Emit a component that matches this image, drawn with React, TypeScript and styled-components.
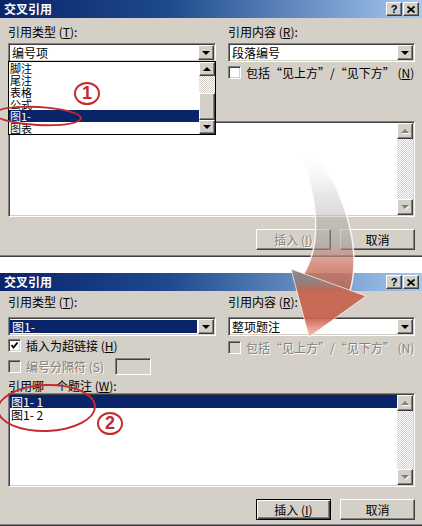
import React from 'react';
import styled, { createGlobalStyle, css } from 'styled-components';

const GlobalStyle = createGlobalStyle`
  html, body {
    margin: 0;
    padding: 0;
    background: #fff;
  }
  body {
    font-family: "Noto Sans CJK SC", "Liberation Sans", sans-serif;
    font-size: 12px;
    color: #000;
  }
`;

const raised = css`
  box-sizing: border-box;
  background: #d4d0c8;
  border: 1px solid;
  border-color: #fff #404040 #404040 #fff;
  box-shadow: inset -1px -1px #808080, inset 1px 1px #d4d0c8;
`;

const sunken = css`
  box-sizing: border-box;
  border: 1px solid;
  border-color: #808080 #fff #fff #808080;
  box-shadow: inset 1px 1px #404040, inset -1px -1px #d4d0c8;
`;

const disabledText = css`
  color: #808080;
  text-shadow: 1px 1px 0 #fff;
`;

const Page = styled.div`
  position: relative;
  width: 422px;
  height: 526px;
  display: flex;
  flex-direction: column;
  gap: 16px;
  overflow: hidden;
`;

const Dialog = styled.div<{ $h: number }>`
  position: relative;
  height: ${p => p.$h}px;
  flex: none;
  display: flex;
  flex-direction: column;
  background: #d4d0c8;
  box-shadow: inset 0 -1px #404040, inset 0 -2px #808080;
`;

const TitleBar = styled.div`
  height: 18px;
  flex: none;
  display: flex;
  align-items: center;
  justify-content: space-between;
  padding: 0 3px 0 4px;
  background: linear-gradient(90deg, #0a246a 0%, #1e4a8e 40%, #a6caf0 100%);
`;

const TitleText = styled.span`
  color: #fff;
  font-weight: bold;
  font-size: 12px;
  line-height: 18px;
`;

const CaptionButtons = styled.div`
  display: flex;
  gap: 1px;
`;

const CaptionButton = styled.span`
  ${raised};
  width: 16px;
  height: 14px;
  display: flex;
  align-items: center;
  justify-content: center;
  font: bold 11px/12px "Liberation Sans", sans-serif;
`;

const Body = styled.div<{ $top: number }>`
  flex: 1;
  display: flex;
  flex-direction: column;
  padding: ${p => p.$top}px 7px 0 8px;
`;

const Columns = styled.div`
  display: grid;
  grid-template-columns: 208px 187px;
  column-gap: 12px;
  align-items: start;
`;

const Column = styled.div`
  display: flex;
  flex-direction: column;
`;

const Label = styled.div<{ $mt?: number }>`
  height: 14px;
  line-height: 14px;
  white-space: nowrap;
  margin-top: ${p => p.$mt ?? 0}px;
`;

const U = styled.span`
  text-decoration: underline;
`;

const Combo = styled.div<{ $mt?: number }>`
  ${sunken};
  position: relative;
  height: 19px;
  padding: 1px;
  margin-top: ${p => p.$mt ?? 0}px;
  background: #fff;
  display: flex;
`;

const ComboText = styled.div<{ $selected?: boolean }>`
  flex: 1;
  height: 15px;
  line-height: 15px;
  padding-left: 2px;
  white-space: nowrap;
  ${p =>
    p.$selected &&
    css`
      margin: 1px 1px 1px 0;
      height: 13px;
      line-height: 13px;
      background: #0a246a;
      color: #fff;
    `}
`;

const DropButton = styled.div`
  ${raised};
  width: 16px;
  height: 15px;
  flex: none;
  display: flex;
  align-items: center;
  justify-content: center;
`;

const Tri = styled.span<{ $dir: 'up' | 'down'; $disabled?: boolean }>`
  width: 0;
  height: 0;
  border-left: 4px solid transparent;
  border-right: 4px solid transparent;
  ${p =>
    p.$dir === 'up'
      ? css`border-bottom: 4px solid ${p.$disabled ? '#808080' : '#000'};`
      : css`border-top: 4px solid ${p.$disabled ? '#808080' : '#000'};`}
  ${p => p.$disabled && css`filter: drop-shadow(1px 1px 0 #fff);`}
`;

const DropList = styled.div`
  position: absolute;
  top: 17px;
  left: -1px;
  right: -1px;
  height: 74px;
  box-sizing: border-box;
  border: 1px solid #000;
  background: #fff;
  display: flex;
  z-index: 3;
`;

const DropItems = styled.div`
  flex: 1;
  display: flex;
  flex-direction: column;
  font-size: 11px;
`;

const Item = styled.div<{ $selected?: boolean; $h: number }>`
  height: ${p => p.$h}px;
  line-height: ${p => p.$h}px;
  padding-left: 1px;
  white-space: nowrap;
  ${p =>
    p.$selected &&
    css`
      background: #0a246a;
      color: #fff;
    `}
`;

const ScrollTrack = styled.div`
  width: 16px;
  flex: none;
  display: flex;
  flex-direction: column;
  background-color: #fff;
  background-image: repeating-conic-gradient(#d4d0c8 0 25%, #fff 0 50%);
  background-size: 2px 2px;
`;

const ArrowBtn = styled.div<{ $h: number }>`
  ${raised};
  height: ${p => p.$h}px;
  flex: none;
  display: flex;
  align-items: center;
  justify-content: center;
`;

const TrackGap = styled.div<{ $h: number }>`
  height: ${p => p.$h}px;
  flex: none;
`;

const Thumb = styled.div<{ $h: number }>`
  ${raised};
  height: ${p => p.$h}px;
  flex: none;
`;

const TrackFill = styled.div`
  flex: 1;
`;

const Scroll: React.FC<{ arrow?: number; thumb?: [number, number]; disabled?: boolean }> = ({
  arrow = 16,
  thumb,
  disabled,
}) => (
  <ScrollTrack>
    <ArrowBtn $h={arrow}>
      <Tri $dir="up" $disabled={disabled} />
    </ArrowBtn>
    {thumb && (
      <>
        <TrackGap $h={thumb[0]} />
        <Thumb $h={thumb[1]} />
      </>
    )}
    <TrackFill />
    <ArrowBtn $h={arrow}>
      <Tri $dir="down" $disabled={disabled} />
    </ArrowBtn>
  </ScrollTrack>
);

const CheckRow = styled.div<{ $mt?: number; $h?: number; $disabled?: boolean }>`
  display: flex;
  align-items: center;
  gap: 5px;
  height: ${p => p.$h ?? 13}px;
  margin-top: ${p => p.$mt ?? 0}px;
  white-space: nowrap;
  ${p => p.$disabled && disabledText};
`;

const CheckBox = styled.span<{ $disabled?: boolean }>`
  ${sunken};
  width: 13px;
  height: 13px;
  flex: none;
  display: flex;
  align-items: center;
  justify-content: center;
  background: ${p => (p.$disabled ? '#d4d0c8' : '#fff')};
`;

const SmallField = styled.span`
  ${sunken};
  width: 36px;
  height: 17px;
  margin-left: 6px;
  background: #d4d0c8;
`;

const ListBox = styled.div<{ $mt: number; $h: number }>`
  ${sunken};
  height: ${p => p.$h}px;
  margin-top: ${p => p.$mt}px;
  padding: 1px;
  background: #fff;
  display: flex;
`;

const ListItems = styled.div`
  flex: 1;
  display: flex;
  flex-direction: column;
`;

const ButtonRow = styled.div<{ $mt: number }>`
  display: flex;
  justify-content: flex-end;
  gap: 9px;
  margin-top: ${p => p.$mt}px;
`;

const PushButton = styled.button<{ $default?: boolean }>`
  ${raised};
  width: 75px;
  height: 21px;
  padding: 0;
  font-family: inherit;
  font-size: 12px;
  color: #000;
  ${p =>
    p.$default &&
    css`
      border: 1px solid #000;
      box-shadow: inset 1px 1px #fff, inset -1px -1px #404040, inset -2px -2px #808080;
    `}
  &:disabled {
    ${disabledText};
  }
`;

const Ellipse = styled.div<{ $x: number; $y: number; $w: number; $h: number; $r?: number }>`
  position: absolute;
  left: ${p => p.$x}px;
  top: ${p => p.$y}px;
  width: ${p => p.$w}px;
  height: ${p => p.$h}px;
  box-sizing: border-box;
  border: 2px solid #c42a2e;
  border-radius: 50%;
  transform: rotate(${p => p.$r ?? 0}deg);
  z-index: 4;
`;

const Badge = styled.div<{ $x: number; $y: number }>`
  position: absolute;
  left: ${p => p.$x}px;
  top: ${p => p.$y}px;
  width: 26px;
  height: 23px;
  box-sizing: border-box;
  border: 2px solid #c42a2e;
  border-radius: 50%;
  color: #c42a2e;
  font: bold 18px/19px "Liberation Sans", sans-serif;
  text-align: center;
  z-index: 4;
`;

const ArrowLayer = styled.svg`
  position: absolute;
  left: 0;
  top: 0;
  pointer-events: none;
  z-index: 5;
`;

const Caption: React.FC = () => (
  <TitleBar>
    <TitleText>交叉引用</TitleText>
    <CaptionButtons>
      <CaptionButton>?</CaptionButton>
      <CaptionButton>
        <svg width="8" height="7" viewBox="0 0 8 7">
          <path d="M0.5 0.5 L7.5 6.5 M7.5 0.5 L0.5 6.5" stroke="#000" strokeWidth="1.8" />
        </svg>
      </CaptionButton>
    </CaptionButtons>
  </TitleBar>
);

const CheckMark = () => (
  <svg width="9" height="9" viewBox="0 0 9 9">
    <polyline points="1.5,4 3.5,6.5 7.5,1.5" fill="none" stroke="#000" strokeWidth="1.8" />
  </svg>
);

const BigArrow = () => (
  <ArrowLayer width={422} height={526} viewBox="0 0 422 526">
    <defs>
      <linearGradient id="shaft" x1="0" y1="150" x2="0" y2="292" gradientUnits="userSpaceOnUse">
        <stop offset="0" stopColor="#ffffff" stopOpacity="0" />
        <stop offset="0.3" stopColor="#b8b4b0" stopOpacity="0.3" />
        <stop offset="0.65" stopColor="#a09a96" stopOpacity="0.55" />
        <stop offset="0.8" stopColor="#d27a66" stopOpacity="0.8" />
        <stop offset="1" stopColor="#b86452" stopOpacity="0.92" />
      </linearGradient>
      <linearGradient id="head" x1="0" y1="268" x2="0" y2="338" gradientUnits="userSpaceOnUse">
        <stop offset="0" stopColor="#8e8886" />
        <stop offset="0.2" stopColor="#96807a" />
        <stop offset="0.32" stopColor="#c5644f" />
        <stop offset="0.72" stopColor="#c9634e" />
        <stop offset="0.86" stopColor="#e59a8c" />
        <stop offset="1" stopColor="#f3c4bc" />
      </linearGradient>
    </defs>
    <path d="M300 150 C318 200 322 245 303 275 L350 291 C362 250 345 190 312 148 Z" fill="url(#shaft)" />
    <path d="M300 150 C318 200 322 245 303 275" fill="none" stroke="#fff" strokeOpacity="0.85" strokeWidth="1.5" />
    <path d="M312 148 C345 190 362 250 350 291" fill="none" stroke="#fff" strokeOpacity="0.85" strokeWidth="1.5" />
    <path d="M291 269 L366 296 L309 337 Z" fill="url(#head)" fillOpacity="0.94" stroke="#fff" strokeOpacity="0.7" />
  </ArrowLayer>
);

const typeItems = ['脚注', '尾注', '表格', '公式', '图1-', '图表'];

export default function App() {
  return (
    <Page>
      <GlobalStyle />

      <Dialog $h={257}>
        <Caption />
        <Body $top={7}>
          <Columns>
            <Column>
              <Label>
                引用类型 (<U>T</U>):
              </Label>
              <Combo $mt={4}>
                <ComboText>编号项</ComboText>
                <DropButton>
                  <Tri $dir="down" />
                </DropButton>
                <DropList>
                  <DropItems>
                    {typeItems.map(t => (
                      <Item key={t} $h={12} $selected={t === '图1-'}>
                        {t}
                      </Item>
                    ))}
                  </DropItems>
                  <Scroll arrow={14} thumb={[17, 27]} />
                </DropList>
              </Combo>
            </Column>
            <Column>
              <Label>
                引用内容 (<U>R</U>):
              </Label>
              <Combo $mt={4}>
                <ComboText>段落编号</ComboText>
                <DropButton>
                  <Tri $dir="down" />
                </DropButton>
              </Combo>
              <CheckRow $mt={4}>
                <CheckBox />
                <span>
                  包括“见上方”/“见下方” (<U>N</U>)
                </span>
              </CheckRow>
            </Column>
          </Columns>
          <ListBox $mt={42} $h={96}>
            <ListItems />
            <Scroll disabled />
          </ListBox>
          <ButtonRow $mt={12}>
            <PushButton disabled>
              插入 (<U>I</U>)
            </PushButton>
            <PushButton>取消</PushButton>
          </ButtonRow>
        </Body>
        <Ellipse $x={-6} $y={106} $w={88} $h={20} $r={3} />
        <Badge $x={74} $y={82}>1</Badge>
      </Dialog>

      <Dialog $h={253}>
        <Caption />
        <Body $top={4}>
          <Columns>
            <Column>
              <Label>
                引用类型 (<U>T</U>):
              </Label>
              <Combo $mt={8}>
                <ComboText $selected>图1-</ComboText>
                <DropButton>
                  <Tri $dir="down" />
                </DropButton>
              </Combo>
              <CheckRow $mt={3}>
                <CheckBox>
                  <CheckMark />
                </CheckBox>
                <span>
                  插入为超链接 (<U>H</U>)
                </span>
              </CheckRow>
              <CheckRow $mt={6} $h={17} $disabled>
                <CheckBox $disabled />
                <span>编号分隔符 (S)</span>
                <SmallField />
              </CheckRow>
              <Label $mt={4}>
                引用哪一个题注 (<U>W</U>):
              </Label>
            </Column>
            <Column>
              <Label>
                引用内容 (<U>R</U>):
              </Label>
              <Combo $mt={8}>
                <ComboText>整项题注</ComboText>
                <DropButton>
                  <Tri $dir="down" />
                </DropButton>
              </Combo>
              <CheckRow $mt={5} $disabled>
                <CheckBox $disabled />
                <span>包括“见上方”/“见下方” (N)</span>
              </CheckRow>
            </Column>
          </Columns>
          <ListBox $mt={0} $h={94}>
            <ListItems>
              <Item $h={13} $selected>
                图1- 1
              </Item>
              <Item $h={13}>图1- 2</Item>
            </ListItems>
            <Scroll disabled />
          </ListBox>
          <ButtonRow $mt={12}>
            <PushButton $default>
              插入 (<U>I</U>)
            </PushButton>
            <PushButton>取消</PushButton>
          </ButtonRow>
        </Body>
        <Ellipse $x={-3} $y={111} $w={99} $h={48} $r={-2} />
        <Badge $x={97} $y={139}>2</Badge>
      </Dialog>

      <BigArrow />
    </Page>
  );
}
